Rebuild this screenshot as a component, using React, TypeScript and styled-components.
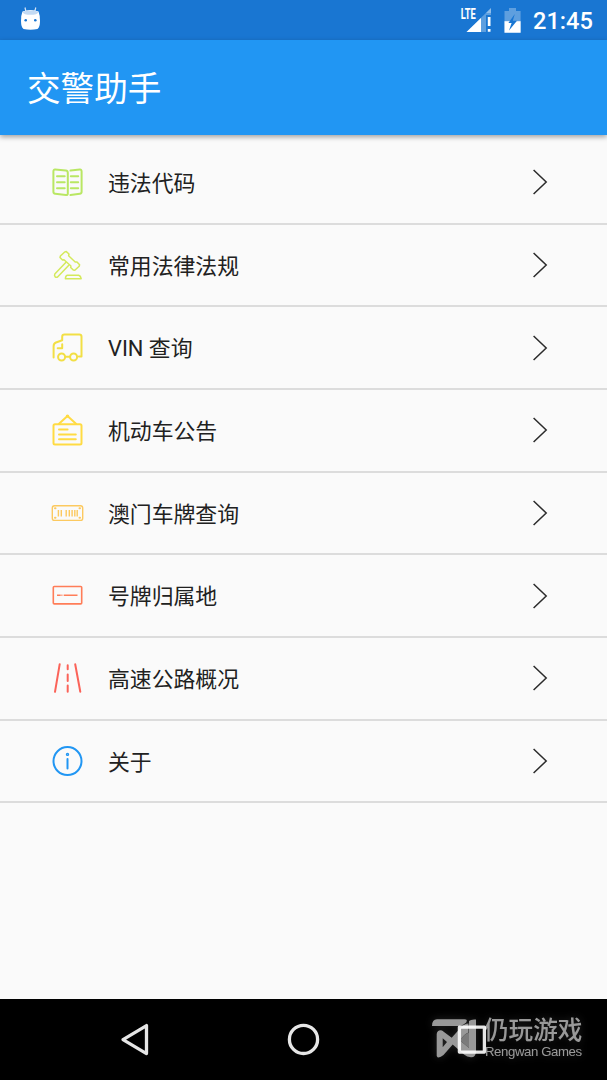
import React from 'react';
import styled, { createGlobalStyle } from 'styled-components';

const GlobalStyle = createGlobalStyle`
  * { box-sizing: border-box; }
  body { margin: 0; background: #fafafa; }
`;

const Screen = styled.div`
  position: relative;
  display: flex;
  flex-direction: column;
  width: 607px;
  height: 1080px;
  overflow: hidden;
  background: #fafafa;
  color: #212121;
  font-family: Roboto, 'Noto Sans CJK SC', sans-serif;
`;

const StatusBar = styled.header`
  display: flex;
  align-items: center;
  justify-content: space-between;
  height: 40.4px;
  flex: none;
  padding: 0 14px 0 18px;
  background: #1976d2;
  color: #fff;
`;

const StatusGroup = styled.div`
  display: flex;
  align-items: center;
  height: 40px;
`;

const Clock = styled.span`
  width: 60px;
  margin-left: 10px;
  font-size: 23.6px;
  font-weight: 500;
  line-height: 40px;
  padding-top: 2px;
  white-space: nowrap;
`;

const AppBar = styled.div`
  position: relative;
  display: flex;
  align-items: center;
  flex: none;
  height: 94.6px;
  padding: 4px 0 0 27px;
  background: #2196f3;
  box-shadow: 0 2px 5px rgba(0, 0, 0, 0.36);
`;

const Title = styled.h1`
  margin: 0;
  color: #fff;
  font-size: 33.6px;
  font-weight: 400;
  line-height: 48px;
`;

const Menu = styled.ul`
  flex: 1;
  margin: 0;
  padding: 7.2px 0 0;
  list-style: none;
`;

const MenuRow = styled.li`
  display: flex;
  align-items: center;
  height: 82.65px;
  padding: 0 58px 0 50px;
  border-bottom: 2px solid #dcdcdc;
`;

const RowIcon = styled.svg<{ $color: string }>`
  flex: none;
  width: 36px;
  height: 36px;
  fill: none;
  stroke: ${(p) => p.$color};
  stroke-width: 2;
  stroke-linecap: round;
  stroke-linejoin: round;
`;

const Label = styled.span`
  flex: 1;
  margin-left: 22px;
  padding-top: 3.4px;
  font-size: 21.85px;
  line-height: 32px;
`;

const Chevron = styled.svg`
  flex: none;
  width: 18px;
  height: 28px;
  fill: none;
  stroke: #2b2b2b;
  stroke-width: 1.5;
`;

const NavBar = styled.nav`
  display: flex;
  align-items: center;
  flex: none;
  height: 81px;
  padding: 0 117px;
  justify-content: space-between;
  background: #000;
`;

const NavIcon = styled.svg`
  width: 36px;
  height: 36px;
  fill: none;
  stroke: #e6e6e6;
  stroke-width: 3.3;
  stroke-linejoin: round;
`;

const Watermark = styled.div`
  position: absolute;
  left: 431px;
  bottom: 16px;
  display: flex;
  height: 52px;
  color: #fff;
  opacity: 0.6;
  filter: drop-shadow(0 0 4px rgba(255, 255, 255, 0.25));
`;

const Brand = styled.div`
  display: flex;
  flex-direction: column;
  margin-left: 6px;
  padding-top: 1px;
  white-space: nowrap;
`;

const BrandName = styled.span`
  font: 500 24.6px/31px 'Noto Sans CJK SC', sans-serif;
`;

const BrandLatin = styled.span`
  margin-left: 1px;
  font: 13.2px/16px 'Liberation Sans', sans-serif;
  letter-spacing: -0.4px;
`;

const items: { label: string; color: string; icon: React.ReactNode }[] = [
  {
    label: '违法代码',
    color: '#b9e763',
    icon: (
      <>
        <path d="M5.2 5.6L15.8 6.6Q17.8 6.8 17.8 8.8V29.5Q17.8 31.2 16 31L5.2 29.8Q3.4 29.6 3.4 27.8V7.4Q3.4 5.4 5.2 5.6Z" />
        <path d="M20.5 6.6L29.8 5.6Q31.6 5.4 31.6 7.4V27.8Q31.6 29.6 29.8 29.8L20.5 31" />
        <path d="M7 12.3h7.7M7 18.3h7.7M7 24.2h7.7M20.8 12.3h7.4M20.8 18.3h7.4M20.8 24.2h7.4" />
      </>
    ),
  },
  {
    label: '常用法律法规',
    color: '#d4e95c',
    icon: (
      <g strokeWidth="1.5">
        <path d="M14.7 5L16.3 4.6L19 7L18.6 8.8L25.2 15L27 15.1L29.6 17.8L29.2 19.2L24.8 23.2L23.3 23L20.7 20.5L20.9 19L14 12.8L12.5 13L10 10.5L10.4 9Z" />
        <path d="M16 15.3L4.8 27Q4 28.5 5.3 30Q6.8 30.8 7.8 29.7L18.8 18.2" />
        <path d="M17.2 28.3H28.7Q30.7 28.8 31.2 31.7H15.4Q15.6 28.7 17.2 28.3Z" />
      </g>
    ),
  },
  {
    label: 'VIN 查询',
    color: '#f2df45',
    icon: (
      <>
        <path d="M3.6 27.6V16.2Q3.6 13.5 6 12.5L12.2 10.2V6.8Q12.2 4.5 14.5 4.5H29.3Q31.5 4.5 31.5 6.8V26.4H28.8" />
        <path d="M12.2 14.2V18.2H7.7M15.8 26.8H19.5" />
        <circle cx="11.6" cy="27" r="3.5" />
        <circle cx="23.6" cy="27" r="3.5" />
      </>
    ),
  },
  {
    label: '机动车公告',
    color: '#ffdb43',
    icon: (
      <>
        <rect x="3.5" y="12.2" width="28" height="20.2" rx="1.5" />
        <path d="M9 11.8L17.5 4.1L26 11.8M9 17.5h8.6M9 22.6h16.8M9 27.3h16.8" />
        <circle cx="17.5" cy="4.1" r="0.7" />
      </>
    ),
  },
  {
    label: '澳门车牌查询',
    color: '#fcc95f',
    icon: (
      <g strokeWidth="1.4">
        <rect x="2.3" y="10.7" width="30.4" height="14.7" rx="2.2" />
        <path d="M8.4 15v6.5M11.3 15v6.5M16.2 15v6.5M19.3 15v6.5M22.1 15v6.5M24.8 15v6.5M27.2 15v6.5" strokeLinecap="butt" />
        <path d="M5 13.3h.5M29.5 13.3h.5M5 22.8h.5M29.5 22.8h.5" strokeWidth="2" />
      </g>
    ),
  },
  {
    label: '号牌归属地',
    color: '#ff7d58',
    icon: (
      <g strokeWidth="1.6">
        <rect x="3.3" y="8.5" width="28.4" height="17.4" rx="1" />
        <path d="M7 17.3h3.7M11.4 17.3h1M13.7 17.3h13.8" strokeLinecap="butt" />
      </g>
    ),
  },
  {
    label: '高速公路概况',
    color: '#fb6359',
    icon: (
      <g strokeWidth="2">
        <path d="M9.7 4.2L5 31.8M25.2 4.2L30.3 31.8M17.7 5.2v4M17.7 14.5v6.5M17.7 25.5v6.3" />
      </g>
    ),
  },
  {
    label: '关于',
    color: '#2196f3',
    icon: (
      <>
        <circle cx="17.5" cy="18.1" r="14" />
        <path d="M17.5 15.9v9.7" />
        <circle cx="17.5" cy="11.4" r="0.7" />
      </>
    ),
  },
];

export default function App() {
  return (
    <Screen>
      <GlobalStyle />
      <StatusBar>
        <StatusGroup>
          <svg width="24" height="34" viewBox="0 0 24 34" fill="none">
            <path d="M8 9L7 4.5M16.6 9L17.8 4.5" stroke="#d6e6f8" strokeWidth="1.2" />
            <path d="M4.5 8.5Q12.5 5.5 20.5 8.5Q22 12 22 18Q22 24 19.5 26Q12.5 27.5 5.5 26Q3 24 3 18Q3 12 4.5 8.5Z" fill="#fff" />
            <ellipse cx="12.5" cy="9.6" rx="7.7" ry="2.2" fill="#c3daf3" />
            <circle cx="7.7" cy="17.3" r="1.3" fill="#1976d2" />
            <circle cx="17.3" cy="17.3" r="1.3" fill="#1976d2" />
          </svg>
        </StatusGroup>
        <StatusGroup>
          <svg width="64" height="40" viewBox="0 0 64 40" fill="#fff">
            <path d="M32 8V32H7.5Z" opacity="0.3" />
            <path d="M22 18V32H7.5Z" />
            <path d="M27 13h5v20h-5Z" fill="#1976d2" />
            <path d="M27 13L32 8V15H27Z" opacity="0.3" />
            <path d="M28.8 17h2.7v9h-2.7ZM28.8 29h2.7v2.8h-2.7Z" />
            <path d="M0 7H17V20H0Z" fill="#1976d2" />
            <text x="1.8" y="19" fontSize="15.2" fontWeight="700" textLength="15" lengthAdjust="spacingAndGlyphs">LTE</text>
            <path d="M50 8h7v3h4.6v21.7H45.5V11H50Z" opacity="0.3" />
            <path d="M45.5 21.2H61.6V32.7H45.5Z" />
            <path d="M55.8 14L49.4 23H52.6L50 30.5L58 20.7H53.8Z" fill="#1976d2" />
          </svg>
          <Clock>21:45</Clock>
        </StatusGroup>
      </StatusBar>
      <AppBar>
        <Title>交警助手</Title>
      </AppBar>
      <Menu>
        {items.map((item) => (
          <MenuRow key={item.label}>
            <RowIcon $color={item.color} viewBox="0 0 36 36">{item.icon}</RowIcon>
            <Label>{item.label}</Label>
            <Chevron viewBox="0 0 18 28"><path d="M2.6 2L15.2 14L2.6 26" /></Chevron>
          </MenuRow>
        ))}
      </Menu>
      <NavBar>
        <NavIcon viewBox="0 0 36 36"><path d="M6 17.6L29.5 3.6V31.6Z" /></NavIcon>
        <NavIcon viewBox="0 0 36 36"><circle cx="17.5" cy="17.4" r="14.1" /></NavIcon>
        <NavIcon viewBox="0 0 36 36"><rect x="5.4" y="5.1" width="25" height="25" /></NavIcon>
      </NavBar>
      <Watermark>
        <svg width="47" height="52" viewBox="0 0 47 52" fill="#fff">
          <path d="M1 14Q1 7.3 6 7.3H33.5Q37 7.3 35.2 10.5Q33 12.5 29 14Z" />
          <path
            d="M5.7 22Q6.5 17.5 11 18.5L20.7 25.7L29 16.5Q33 11.5 37.5 11.5V20.5Q33 22 29 28.5L38 36V9Q40 7 45 7.5V40Q44.5 45.5 40 45.3Q36 45 33 42.5L21.7 32.5L12.5 43Q9 46 6.5 45.3L5.7 44ZM11.7 26.3V35.3L16 30Z"
            fillRule="evenodd"
          />
          <path d="M29 28.5Q33 22 38 20.5V36Z" opacity="0.75" />
        </svg>
        <Brand>
          <BrandName>仍玩游戏</BrandName>
          <BrandLatin>Rengwan Games</BrandLatin>
        </Brand>
      </Watermark>
    </Screen>
  );
}
